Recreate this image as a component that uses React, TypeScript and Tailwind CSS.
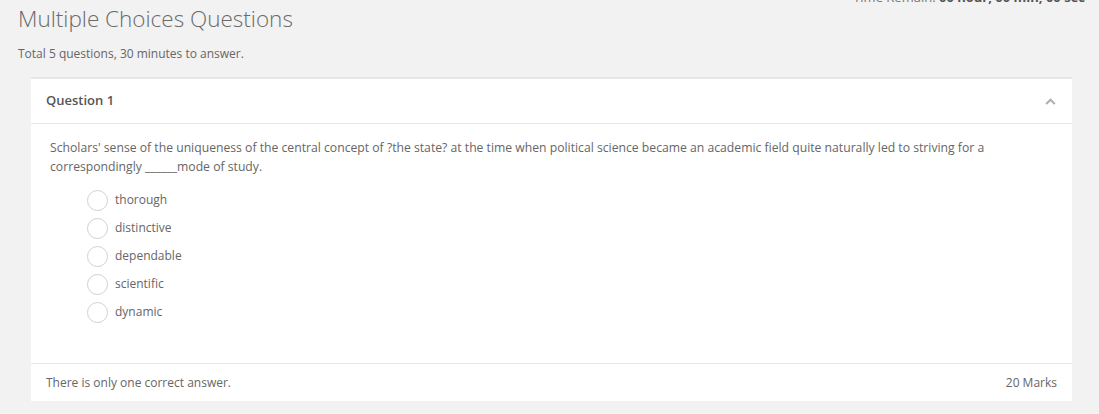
import { useState } from "react";

const OPTIONS = ["thorough", "distinctive", "dependable", "scientific", "dynamic"];

export default function App() {
  const [picked, setPicked] = useState<string | null>(null);

  return (
    <div className="min-h-screen bg-[#f2f2f2] font-['Open_Sans',sans-serif] text-[#666] overflow-hidden">
      <div className="-mt-[9px] pr-[14px] text-right text-[13px] leading-[13px] text-[#777]">
        Time Remain: <span className="font-bold text-[#555]">00 hour, 00 min, 00 sec</span>
      </div>

      <div className="px-[18px]">
        <h1 className="mt-[0px] text-[22.5px] font-light leading-[30px] text-[#6a6a6a]">Multiple Choices Questions</h1>
        <p className="mt-[12px] text-[12px] leading-[16px] text-[#666]">Total 5 questions, 30 minutes to answer.</p>
      </div>

      <div className="ml-[31px] mr-[27px] mt-[15px] border-t-2 border-[#e4e7ea] bg-white">
        <div className="flex h-[45px] items-center justify-between border-b border-[#e9e9e9] pl-[15px] pr-[16px]">
          <span className="text-[13px] font-semibold text-[#555]">Question 1</span>
          <svg width="11" height="7" viewBox="0 0 11 7" fill="none">
            <path d="M1.2 6L5.5 1.8L9.8 6" stroke="#b0b0b0" strokeWidth="2.2" />
          </svg>
        </div>

        <div className="px-[19px] pt-[14px] pb-[37px]">
          <p className="text-[12.2px] leading-[19px] text-[#666]">
            Scholars' sense of the uniqueness of the central concept of ?the state? at the time when political science became an academic field quite naturally led to striving for a correspondingly ______mode of study.
          </p>
          <ul className="mt-[10px] pl-[37px]">
            {OPTIONS.map((opt) => (
              <li key={opt}>
                <label className="flex h-[28px] cursor-pointer items-center gap-[7px]" onClick={() => setPicked(opt)}>
                  <span className="flex h-[21px] w-[21px] items-center justify-center rounded-full border border-[#d0d0d0] bg-white">
                    {picked === opt && <span className="h-[10px] w-[10px] rounded-full bg-[#5b9bd5]" />}
                  </span>
                  <span className="text-[12px] text-[#666]">{opt}</span>
                </label>
              </li>
            ))}
          </ul>
        </div>

        <div className="flex h-[38px] items-center justify-between border-t border-[#e9e9e9] px-[15px] text-[12px] text-[#666]">
          <span>There is only one correct answer.</span>
          <span>20 Marks</span>
        </div>
      </div>
    </div>
  );
}
